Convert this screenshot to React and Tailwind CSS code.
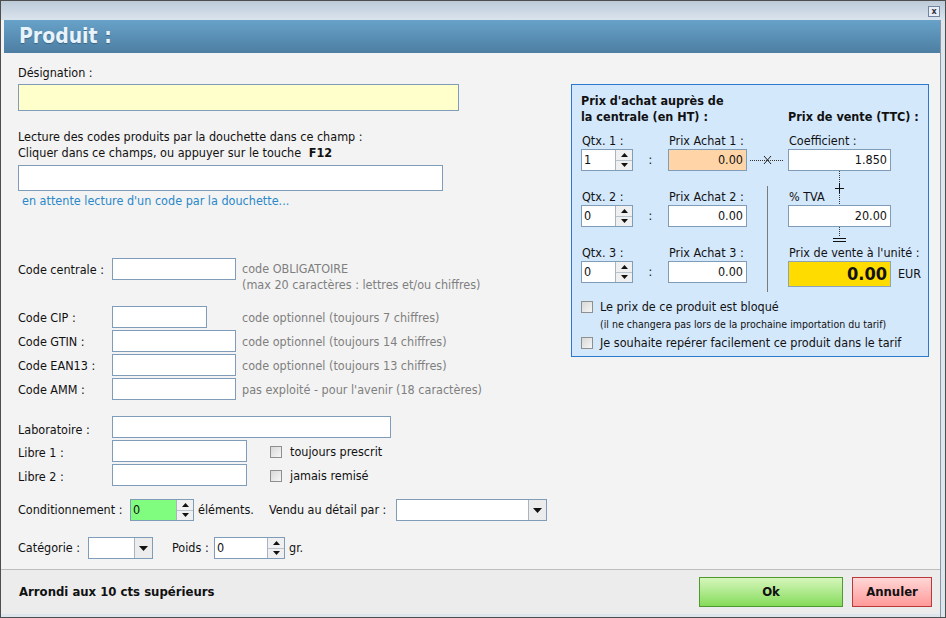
const base = "font-['DejaVu_Sans_Condensed','DejaVu_Sans',sans-serif] text-[12.5px] text-[#111]";

function Field({ className = "", children }) {
  return <div className={`border border-[#7f9db9] bg-white ${className}`}>{children}</div>;
}

function Arrow({ up }) {
  return (
    <svg viewBox="0 0 7 4" className="h-[4px] w-[7px]">
      <polygon points={up ? "3.5,0 7,4 0,4" : "0,0 7,0 3.5,4"} fill="#111" />
    </svg>
  );
}

function Spin({ value, className = "", bg = "bg-white" }) {
  return (
    <div className={`flex h-[22px] border border-[#7f9db9] ${bg} ${className}`}>
      <div className="flex-1 pl-[2px] leading-[20px]">{value}</div>
      <div className="flex w-[17px] flex-col border-l border-[#a7b4c2] bg-[#f0f0f0]">
        <div className="flex flex-1 items-center justify-center border-b border-[#b9c3cd]"><Arrow up /></div>
        <div className="flex flex-1 items-center justify-center"><Arrow /></div>
      </div>
    </div>
  );
}

function Select({ className = "" }) {
  return (
    <div className={`flex h-[22px] border border-[#7f9db9] bg-white ${className}`}>
      <div className="flex-1" />
      <div className="flex w-[18px] items-center justify-center border-l border-[#a7b4c2] bg-[#ececec]">
        <svg viewBox="0 0 9 5" className="h-[5px] w-[9px]"><polygon points="0,0 9,0 4.5,5" fill="#111" /></svg>
      </div>
    </div>
  );
}

function Check() {
  return <div className="h-[12px] w-[12px] shrink-0 border border-[#8e8f8f] bg-linear-to-br from-[#d8d8d8] to-[#f6f6f6]" />;
}

function CodeRow({ label, w, gap = "ml-[6px]", hint }) {
  return (
    <div className="flex h-[24px] items-start">
      <div className="w-[94px] pt-[1px] leading-[22px]">{label}</div>
      <Field className={`h-[22px] ${w}`} />
      <div className={`${gap} pt-[1px] leading-[22px] text-[#7f7f7f]`}>{hint}</div>
    </div>
  );
}

function Group({ n, value }) {
  return (
    <div>
      <div className="flex h-[16px] leading-[16px]">
        <div className="w-[87px] pl-[1px]">Qtx. {n} :</div>
        <div className="pl-[1px]">Prix Achat {n} :</div>
      </div>
      <div className="flex h-[22px] items-center">
        <Spin value={value} className="w-[52px]" />
        <div className="w-[35px] text-center">:</div>
        <Field className={`h-[22px] w-[79px] pr-[3px] text-right leading-[20px] ${n === 1 ? "!bg-[#ffd5a8]" : ""}`}>0.00</Field>
      </div>
    </div>
  );
}

function Panel() {
  return (
    <div className="mt-[31px] ml-[8px] h-[273px] w-[358px] border border-[#2b79cc] bg-[#d4e8fc] pt-[8px] pl-[9px]">
      <div className="flex font-bold leading-[16px]">
        <div className="w-[207px]">Prix d'achat auprès de<br />la centrale (en HT) :</div>
        <div className="self-end">Prix de vente (TTC) :</div>
      </div>
      <div className="mt-[8px] flex">
        <div className="flex w-[166px] flex-col gap-[18px]">
          <Group n={1} value="1" />
          <Group n={2} value="0" />
          <Group n={3} value="0" />
        </div>
        <div className="relative w-[41px]">
          <svg className="absolute top-[16px] left-0 h-[22px] w-[41px]" viewBox="0 0 41 22">
            <line x1="3" y1="11.5" x2="37" y2="11.5" stroke="#333" strokeDasharray="1 1" />
            <line x1="17" y1="7" x2="24" y2="15" stroke="#222" />
            <line x1="24" y1="7" x2="17" y2="15" stroke="#222" />
          </svg>
          <div className="absolute top-[53px] left-[20px] h-[106px] w-px bg-[#7a7a7a]" />
        </div>
        <div className="relative flex flex-col">
          <div className="h-[16px] pl-[1px] leading-[16px]">Coefficient :</div>
          <Field className="h-[22px] w-[103px] pr-[3px] text-right leading-[20px]">1.850</Field>
          <div className="mt-[18px] h-[16px] pl-[1px] leading-[16px]">% TVA</div>
          <Field className="h-[22px] w-[103px] pr-[3px] text-right leading-[20px]">20.00</Field>
          <div className="mt-[18px] h-[16px] pl-[1px] leading-[16px]">Prix de vente à l'unité :</div>
          <div className="flex items-center">
            <div className="h-[26px] w-[103px] border border-[#8fa3b8] bg-[#ffdc00] pr-[3px] text-right text-[18px] leading-[24px] font-bold">0.00</div>
            <div className="ml-[7px]">EUR</div>
          </div>
          <svg className="absolute top-[38px] left-[46px] h-[34px] w-[12px]" viewBox="0 0 12 34">
            <line x1="5.5" y1="0" x2="5.5" y2="34" stroke="#333" strokeDasharray="1 1" />
            <line x1="1" y1="17.5" x2="10" y2="17.5" stroke="#111" />
            <line x1="5.5" y1="12" x2="5.5" y2="22" stroke="#111" />
          </svg>
          <svg className="absolute top-[94px] left-[44px] h-[18px] w-[14px]" viewBox="0 0 14 18">
            <line x1="7.5" y1="0" x2="7.5" y2="10" stroke="#333" strokeDasharray="1 1" />
            <line x1="1" y1="11.5" x2="14" y2="11.5" stroke="#111" />
            <line x1="1" y1="14.5" x2="14" y2="14.5" stroke="#111" />
          </svg>
        </div>
      </div>
      <div className="mt-[13px] flex items-center gap-[7px] leading-[14px]">
        <Check />
        <div>Le prix de ce produit est bloqué</div>
      </div>
      <div className="mt-[3px] pl-[19px] text-[10.5px] leading-[14px]">(il ne changera pas lors de la prochaine importation du tarif)</div>
      <div className="mt-[5px] flex items-center gap-[7px] leading-[14px]">
        <Check />
        <div>Je souhaite repérer facilement ce produit dans le tarif</div>
      </div>
    </div>
  );
}

export default function App() {
  return (
    <div className={`${base} flex h-[618px] w-[946px] flex-col overflow-hidden border border-[#4e4e4e] bg-[#dde5ed]`}>
      <div className="relative h-[19px] shrink-0 bg-linear-to-b from-[#bccad8] to-[#dae4ee]">
        <div className="absolute top-[5px] right-[5px] flex h-[11px] w-[12px] items-center justify-center border border-[#7384a0] bg-[#e8eef5] text-[9px] leading-none font-bold text-[#334]">x</div>
      </div>
      <div className="mr-[4px] flex flex-1 flex-col border-r border-[#8a96a3] bg-[#f3f3f3]">
        <div className="ml-[3px] flex h-[33px] shrink-0 items-center bg-linear-to-b from-[#68a2c9] to-[#4d7ea2] pl-[15px]">
          <span className="text-[21px] font-bold text-[#e8f3fc] [text-shadow:0_1px_1px_#3a6585]">Produit :</span>
        </div>
        <div className="flex flex-1 items-start pl-[17px]">
          <div className="w-[545px] shrink-0">
            <div className="mt-[12px] h-[16px] leading-[16px]">Désignation :</div>
            <Field className="mt-[3px] h-[27px] w-[441px] !bg-[#ffffcc]" />
            <div className="mt-[18px] leading-[16px]">
              Lecture des codes produits par la douchette dans ce champ :<br />
              Cliquer dans ce champs, ou appuyer sur le touche <b className="ml-[4px]">F12</b>
            </div>
            <Field className="mt-[4px] h-[26px] w-[425px]" />
            <div className="mt-[2px] ml-[4px] leading-[16px] text-[#2a88c8]">en attente lecture d'un code par la douchette...</div>
            <div className="mt-[49px] flex h-[48px] items-start">
              <div className="w-[94px] pt-[1px] leading-[22px]">Code centrale :</div>
              <Field className="h-[22px] w-[124px]" />
              <div className="ml-[6px] pt-[3px] leading-[16px] text-[#7f7f7f]">code OBLIGATOIRE<br />(max 20 caractères : lettres et/ou chiffres)</div>
            </div>
            <CodeRow label="Code CIP :" w="w-[95px]" gap="ml-[35px]" hint="code optionnel (toujours 7 chiffres)" />
            <CodeRow label="Code GTIN :" w="w-[124px]" hint="code optionnel (toujours 14 chiffres)" />
            <CodeRow label="Code EAN13 :" w="w-[124px]" hint="code optionnel (toujours 13 chiffres)" />
            <CodeRow label="Code AMM :" w="w-[124px]" hint="pas exploité - pour l'avenir (18 caractères)" />
            <div className="mt-[14px] flex h-[24px] items-start">
              <div className="w-[94px] pt-[3px] leading-[22px]">Laboratoire :</div>
              <Field className="h-[22px] w-[279px]" />
            </div>
            {["Libre 1 :", "Libre 2 :"].map((l, i) => (
              <div key={l} className="flex h-[24px] items-start">
                <div className="w-[94px] pt-[2px] leading-[22px]">{l}</div>
                <Field className="h-[22px] w-[135px]" />
                <div className="ml-[23px] flex h-[22px] items-center gap-[8px] pt-[2px]">
                  <Check />
                  <span>{i === 0 ? "toujours prescrit" : "jamais remisé"}</span>
                </div>
              </div>
            ))}
            <div className="mt-[11px] flex items-center">
              <div className="w-[112px]">Conditionnement :</div>
              <Spin value="0" className="w-[64px]" bg="bg-[#80fd7e]" />
              <div className="ml-[4px] w-[71px]">éléments.</div>
              <div className="w-[127px]">Vendu au détail par :</div>
              <Select className="w-[151px]" />
            </div>
            <div className="mt-[16px] flex items-center">
              <div className="w-[70px]">Catégorie :</div>
              <Select className="h-[21px] w-[65px]" />
              <div className="ml-[19px] w-[42px]">Poids :</div>
              <Spin value="0" className="w-[71px]" />
              <div className="ml-[4px]">gr.</div>
            </div>
          </div>
          <Panel />
        </div>
        <div className="flex h-[45px] shrink-0 items-center border-t border-[#bdbdbd] bg-[#ececec] pr-[8px] pl-[18px]">
          <div className="flex-1 text-[13px] font-bold">Arrondi aux 10 cts supérieurs</div>
          <div className="flex h-[30px] w-[144px] items-center justify-center border border-[#4f9a30] bg-linear-to-b from-[#d6f6bb] to-[#84db58] text-[13px] font-bold">Ok</div>
          <div className="ml-[9px] flex h-[30px] w-[80px] items-center justify-center border border-[#b83a3a] bg-linear-to-b from-[#ffd6d6] to-[#ff9a9a] text-[13px] font-bold">Annuler</div>
        </div>
        <div className="h-[3px] shrink-0 bg-[#dde5ed]" />
      </div>
    </div>
  );
}
